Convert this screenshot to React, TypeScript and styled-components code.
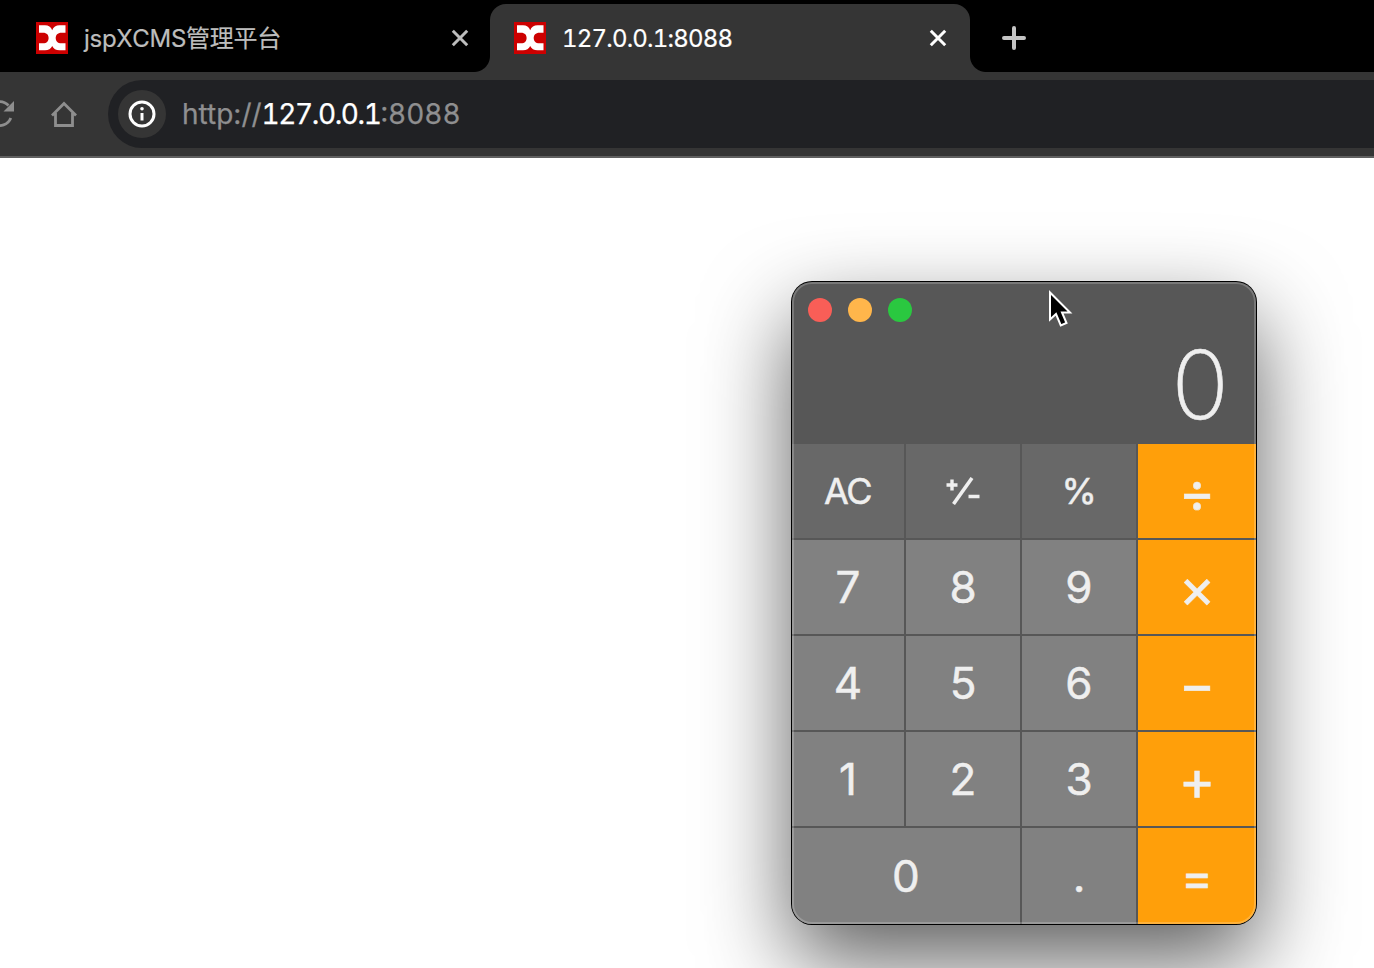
import React from 'react';
import styled, { createGlobalStyle } from 'styled-components';

const Global = createGlobalStyle`
  * { box-sizing: border-box; }
  body { margin: 0; background: #fff; overflow: hidden; font-family: Inter, "Noto Sans CJK SC", sans-serif; }
`;

const Page = styled.div`
  width: 1374px;
  height: 968px;
  display: flex;
  flex-direction: column;
  overflow: hidden;
`;

const TabStrip = styled.div`
  height: 72px;
  flex: none;
  background: #000;
  display: flex;
  align-items: flex-end;
`;

const Tab = styled.div<{ $active?: boolean }>`
  position: relative;
  width: ${p => (p.$active ? 480 : 490)}px;
  height: 68px;
  padding: ${p => (p.$active ? '0 20px 0 24px' : '0 18px 0 36px')};
  display: flex;
  align-items: center;
  border-radius: 16px 16px 0 0;
  background: ${p => (p.$active ? '#353535' : 'transparent')};
  color: ${p => (p.$active ? '#fff' : '#bdbdbd')};
  ${p => p.$active && `
    &::before, &::after {
      content: '';
      position: absolute;
      bottom: 0;
      width: 16px;
      height: 16px;
    }
    &::before { left: -16px; background: radial-gradient(circle at 0 0, transparent 15.5px, #353535 16.5px); }
    &::after { right: -16px; background: radial-gradient(circle at 100% 0, transparent 15.5px, #353535 16.5px); }
  `}
`;

const TabTitle = styled.span<{ $spacing: number }>`
  flex: 1;
  margin-left: 16px;
  font-size: 24px;
  line-height: 33px;
  white-space: nowrap;
  font-variant-numeric: tabular-nums;
  font-kerning: none;
  letter-spacing: ${p => p.$spacing}px;
  -webkit-text-stroke: 0.2px currentColor;
`;

const TabClose = styled.svg`
  width: 24px;
  height: 24px;
  flex: none;
  stroke: currentColor;
  stroke-width: 3;
`;

const NewTab = styled.svg`
  width: 28px;
  height: 28px;
  margin: 0 0 20px 30px;
  stroke: #c4c4c4;
  stroke-width: 4;
  stroke-linecap: round;
`;

const Toolbar = styled.div`
  height: 86px;
  flex: none;
  padding-top: 8px;
  background: #353535;
  border-bottom: 2px solid #606060;
  display: flex;
`;

const NavIcons = styled.svg`
  width: 108px;
  height: 68px;
  flex: none;
  fill: none;
  stroke: #8e8e8e;
  stroke-width: 2.8;
`;

const AddressBar = styled.div`
  flex: 1;
  height: 68px;
  padding-left: 10px;
  border-radius: 34px 0 0 34px;
  background: #202124;
  display: flex;
  align-items: center;
`;

const InfoBadge = styled.div`
  width: 48px;
  height: 48px;
  border-radius: 50%;
  background: #353535;
  display: grid;
  place-items: center;
`;

const Url = styled.div`
  margin-left: 16px;
  font-size: 28px;
  line-height: 36px;
  color: #8f8f90;
  white-space: pre;
  -webkit-text-stroke: 0.25px currentColor;
`;

const Host = styled.span`
  color: #fff;
  font-variant-numeric: tabular-nums;
  font-kerning: none;
  letter-spacing: -1.4px;
`;

const Port = styled.span`
  font-variant-numeric: tabular-nums;
  font-kerning: none;
`;

const Desktop = styled.div`
  flex: 1;
  padding: 124px 0 0 792px;
`;

const Calculator = styled.div`
  position: relative;
  width: 464px;
  height: 642px;
  border-radius: 20px;
  background: #575757;
  box-shadow: 0 0 0 1px #000, 0 36px 88px rgba(0, 0, 0, 0.64);
  display: flex;
  flex-direction: column;

  &::after {
    content: '';
    position: absolute;
    inset: 0;
    border-radius: 20px;
    box-shadow: inset 0 0 0 2px rgba(255, 255, 255, 0.2);
    pointer-events: none;
  }
`;

const TitleBar = styled.div`
  height: 56px;
  padding-left: 16px;
  display: flex;
  align-items: center;
  gap: 16px;
`;

const Light = styled.i<{ $color: string }>`
  width: 24px;
  height: 24px;
  border-radius: 50%;
  background: ${p => p.$color};
`;

const Display = styled.div`
  height: 106px;
  padding: 0 27px 0 0;
  display: flex;
  justify-content: flex-end;
  line-height: 93px;
  font-size: 95px;
  font-weight: 200;
  color: #efefef;
  -webkit-text-stroke: 0.6px currentColor;
`;

const Keypad = styled.div`
  flex: 1;
  display: grid;
  grid-template-columns: 112px 114px 114px 118px;
  grid-template-rows: 94px 94px 94px 94px 96px;
  gap: 2px;
  border-radius: 0 0 20px 20px;
  overflow: hidden;
`;

type Kind = 'function' | 'digit' | 'operator';
const fills: Record<Kind, string> = { function: '#686868', digit: '#818181', operator: '#ff9f0a' };
const sizes: Record<Kind, number> = { function: 36, digit: 44, operator: 56 };

const Key = styled.div<{ $kind: Kind; $wide?: boolean; $size?: number }>`
  grid-column: ${p => (p.$wide ? 'span 2' : 'auto')};
  display: flex;
  align-items: center;
  justify-content: center;
  padding-top: ${p => (p.$kind === 'operator' && !p.$size ? 1 : 0)}px;
  padding-right: ${p => (p.$kind === 'function' ? 1 : 0)}px;
  background: ${p => fills[p.$kind]};
  color: #efefef;
  font-size: ${p => p.$size ?? sizes[p.$kind]}px;
  font-weight: 400;
  letter-spacing: ${p => (p.$kind === 'function' ? -1.5 : 0)}px;
  line-height: 1;
  -webkit-text-stroke: ${p => (p.$size ? 1 : 0.5)}px currentColor;
`;

const PlusMinus = styled.svg`
  width: 34px;
  height: 28px;
  margin-left: 1px;
  fill: none;
  stroke: #efefef;
`;

const Pointer = styled.svg`
  position: absolute;
  left: 256px;
  top: 7px;
  width: 26px;
  height: 40px;
`;

const Logo = () => (
  <svg width="32" height="32" viewBox="0 0 32 32">
    <rect width="32" height="32" fill="#cc0000" />
    <path fill="#fff" d="M3 3.300H9C12.500 3.300 15 5 16.200 8.200C17.400 5 20 3.300 23.500 3.300H29.500V10.700H25.500C21.500 10.700 19.700 13 19.700 16S21.500 21.300 25.500 21.300H29.500V28.300H23.500C20 28.300 17.400 26.800 16.200 24C15 26.800 12.500 28.300 9 28.300H3V21.300H7C11 21.300 12.600 19 12.600 16S11 10.700 7 10.700H3Z" />
  </svg>
);

const Cross = () => (
  <TabClose viewBox="0 0 24 24"><path d="M4.800 4.800l14.400 14.400M19.200 4.800L4.800 19.200" /></TabClose>
);

const keys: { label: string; kind: Kind; wide?: boolean; size?: number }[] = [
  { label: 'AC', kind: 'function' }, { label: '⁺∕₋', kind: 'function' }, { label: '%', kind: 'function' }, { label: '÷', kind: 'operator' },
  { label: '7', kind: 'digit' }, { label: '8', kind: 'digit' }, { label: '9', kind: 'digit' }, { label: '×', kind: 'operator' },
  { label: '4', kind: 'digit' }, { label: '5', kind: 'digit' }, { label: '6', kind: 'digit' }, { label: '−', kind: 'operator' },
  { label: '1', kind: 'digit' }, { label: '2', kind: 'digit' }, { label: '3', kind: 'digit' }, { label: '+', kind: 'operator' },
  { label: '0', kind: 'digit', wide: true }, { label: '.', kind: 'digit' }, { label: '=', kind: 'operator', size: 47 },
];

export default function App() {
  return (
    <Page>
      <Global />
      <TabStrip>
        <Tab>
          <Logo />
          <TabTitle $spacing={-0.3}>jspXCMS管理平台</TabTitle>
          <Cross />
        </Tab>
        <Tab $active>
          <Logo />
          <TabTitle $spacing={-0.8}>127.0.0.1:8088</TabTitle>
          <Cross />
        </Tab>
        <NewTab viewBox="0 0 28 28"><path d="M14 4v20M4 14h20" /></NewTab>
      </TabStrip>
      <Toolbar>
        <NavIcons viewBox="0 0 108 68">
          <path d="M10.800 38A12 12 0 1 1 8.500 25.500" />
          <path d="M14 21v10.500H3.500Z" fill="#8e8e8e" stroke="none" />
          <path d="M52 35.500L64 23.500l12 12M55.500 33v12.500h17V33" />
        </NavIcons>
        <AddressBar>
          <InfoBadge>
            <svg width="28" height="28" viewBox="0 0 28 28">
              <circle cx="14" cy="14" r="12" fill="none" stroke="#fff" strokeWidth="3" />
              <path d="M14 13v7.500" stroke="#fff" strokeWidth="3" />
              <circle cx="14" cy="8.800" r="1.800" fill="#fff" />
            </svg>
          </InfoBadge>
          <Url>http://<Host>127.0.0.1</Host><Port>:8088</Port></Url>
        </AddressBar>
      </Toolbar>
      <Desktop>
        <Calculator>
          <TitleBar>
            <Light $color="#f95e57" />
            <Light $color="#ffb64b" />
            <Light $color="#2ac840" />
          </TitleBar>
          <Display>0</Display>
          <Keypad>
            {keys.map(k => (
              <Key key={k.label + k.kind} $kind={k.kind} $wide={k.wide} $size={k.size}>
                {k.label === '⁺∕₋' ? (
                  <PlusMinus viewBox="0 0 34 28" aria-label="plus minus">
                    <path strokeWidth="3.400" d="M.500 8h11M6 2.500v11M22.500 19.500h11" />
                    <path strokeWidth="3.600" d="M7.500 27L26 1" />
                  </PlusMinus>
                ) : k.label}
              </Key>
            ))}
          </Keypad>
          <Pointer viewBox="0 0 26 40">
            <path d="M2 3.500V30.500L8 25L12.800 36.500L18.500 34L14 23.500H22Z" fill="#000" stroke="#fff" strokeWidth="2" />
          </Pointer>
        </Calculator>
      </Desktop>
    </Page>
  );
}
